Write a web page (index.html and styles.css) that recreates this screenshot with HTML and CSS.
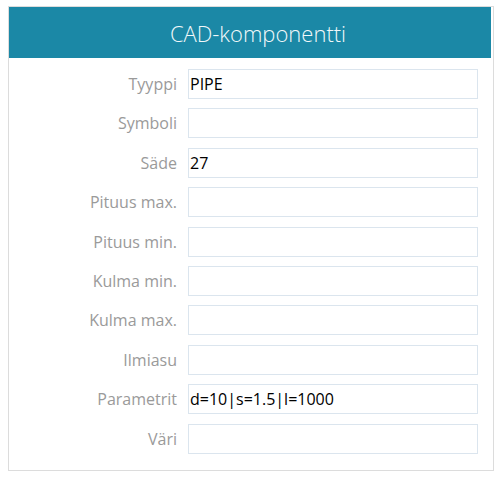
FILE: index.html
```html
<!DOCTYPE html>
<html>
<head>
<meta charset="utf-8">
<link rel="stylesheet" href="styles.css">
</head>
<body>
<div class="panel">
  <div class="header">CAD-komponentti</div>
  <div class="form">
    <label class="lbl">Tyyppi</label><div class="inp">PIPE</div>
    <label class="lbl">Symboli</label><div class="inp"></div>
    <label class="lbl">Säde</label><div class="inp">27</div>
    <label class="lbl">Pituus max.</label><div class="inp"></div>
    <label class="lbl">Pituus min.</label><div class="inp"></div>
    <label class="lbl">Kulma min.</label><div class="inp"></div>
    <label class="lbl">Kulma max.</label><div class="inp"></div>
    <label class="lbl">Ilmiasu</label><div class="inp"></div>
    <label class="lbl">Parametrit</label><div class="inp">d=10|s=1.5|l=1000</div>
    <label class="lbl">Väri</label><div class="inp"></div>
  </div>
</div>
</body>
</html>
```

FILE: styles.css
```css
html, body {
  margin: 0;
  padding: 0;
  background: #fff;
}
body {
  padding: 6px 5px 0 8px;
  font-family: "Open Sans", "Noto Sans", sans-serif;
}
.panel {
  border: 1px solid #dcdcdc;
  box-sizing: border-box;
  width: 486px;
}
.header {
  background: #1b88a6;
  color: #f2f8fa;
  height: 51px;
  margin-right: 2px;
  display: flex;
  align-items: center;
  justify-content: center;
  padding-left: 16px;
  font-size: 22px;
  font-weight: 300;
}
.form {
  display: grid;
  grid-template-columns: 168px 290px;
  column-gap: 11px;
  row-gap: 9.4px;
  padding: 11px 0 16px 0;
}
.lbl {
  color: #9a9a9a;
  font-size: 16px;
  display: flex;
  align-items: center;
  justify-content: flex-end;
  height: 30px;
}
.inp {
  height: 30px;
  box-sizing: border-box;
  border: 1px solid #dbe5ee;
  font-size: 16px;
  color: #000;
  padding-left: 1px;
  display: flex;
  align-items: center;
}
```
